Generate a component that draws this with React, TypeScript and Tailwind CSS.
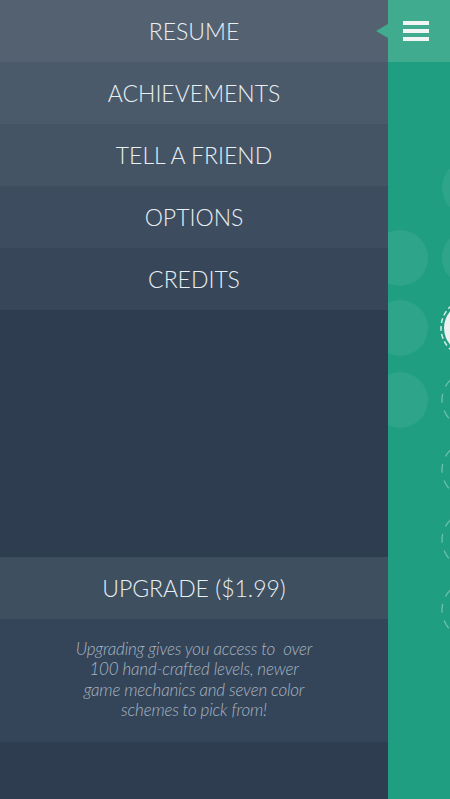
import React from "react";

const menuItems = [
  { label: "RESUME", bg: "bg-[#536170]" },
  { label: "ACHIEVEMENTS", bg: "bg-[#4b5a6a]" },
  { label: "TELL A FRIEND", bg: "bg-[#445465]" },
  { label: "OPTIONS", bg: "bg-[#3d4d5f]" },
  { label: "CREDITS", bg: "bg-[#374759]" },
];

// level bubbles peeking out from behind the menu
const bubbles: { cx: number; cy: number; kind: "faint" | "white" | "dashed" }[] = [
  { cx: 12, cy: 258, kind: "faint" },
  { cx: 12, cy: 328, kind: "faint" },
  { cx: 12, cy: 400, kind: "faint" },
  { cx: 82, cy: 188, kind: "faint" },
  { cx: 82, cy: 258, kind: "faint" },
  { cx: 82, cy: 328, kind: "white" },
  { cx: 82, cy: 400, kind: "dashed" },
  { cx: 82, cy: 470, kind: "dashed" },
  { cx: 82, cy: 540, kind: "dashed" },
  { cx: 82, cy: 610, kind: "dashed" },
];

function LevelBubbles() {
  return (
    <svg className="absolute inset-0" width="62" height="799" viewBox="0 0 62 799">
      {bubbles.map((b, i) => {
        if (b.kind === "faint") {
          return <circle key={i} cx={b.cx} cy={b.cy} r="28" fill="rgba(255,255,255,0.07)" />;
        }
        if (b.kind === "white") {
          return (
            <g key={i}>
              <circle cx={b.cx} cy={b.cy} r="29" fill="none" stroke="rgba(255,255,255,0.8)" strokeWidth="1.5" strokeDasharray="5 3" />
              <circle cx={b.cx} cy={b.cy} r="26" fill="#eef1f0" />
            </g>
          );
        }
        return (
          <circle key={i} cx={b.cx} cy={b.cy} r="28" fill="none" stroke="rgba(255,255,255,0.35)" strokeWidth="1.3" strokeDasharray="9 8" />
        );
      })}
    </svg>
  );
}

export default function App() {
  return (
    <div className="flex h-[799px] w-[450px] overflow-hidden font-['Lato','Open_Sans',sans-serif] text-[#e9eff3]">
      <nav className="flex w-[388px] flex-col bg-[#2e3d4f]">
        {menuItems.map((item) => (
          <div key={item.label} className={`flex h-[62px] items-center justify-center text-[23px] font-light ${item.bg}`}>
            {item.label}
          </div>
        ))}
        <div className="flex-1" />
        <div className="flex h-[62px] items-center justify-center bg-[#3e4f60] text-[23px] font-light">
          UPGRADE ($1.99)
        </div>
        <div className="flex h-[123px] items-center justify-center bg-[#344559] pb-[2px]">
          <p className="text-center text-[17px] font-light italic leading-[20.5px] tracking-[-0.2px] text-[#a8b4c1]">
            Upgrading gives you access to &nbsp;over
            <br />
            100 hand-crafted levels, newer
            <br />
            game mechanics and seven color
            <br />
            schemes to pick from!
          </p>
        </div>
        <div className="h-[57px]" />
      </nav>

      <aside className="relative flex-1 bg-[#1f9e82]">
        <LevelBubbles />
        <div className="relative flex h-[62px] items-center bg-[#40ab8f] pl-[15px]">
          <div className="flex flex-col gap-[4px]">
            <span className="block h-[4px] w-[26px] bg-[#f1f5f4]" />
            <span className="block h-[4px] w-[26px] bg-[#f1f5f4]" />
            <span className="block h-[4px] w-[26px] bg-[#f1f5f4]" />
          </div>
          <span className="absolute left-[-12px] top-[24px] h-0 w-0 border-y-[7px] border-r-[12px] border-y-transparent border-r-[#40ab8f]" />
        </div>
      </aside>
    </div>
  );
}
